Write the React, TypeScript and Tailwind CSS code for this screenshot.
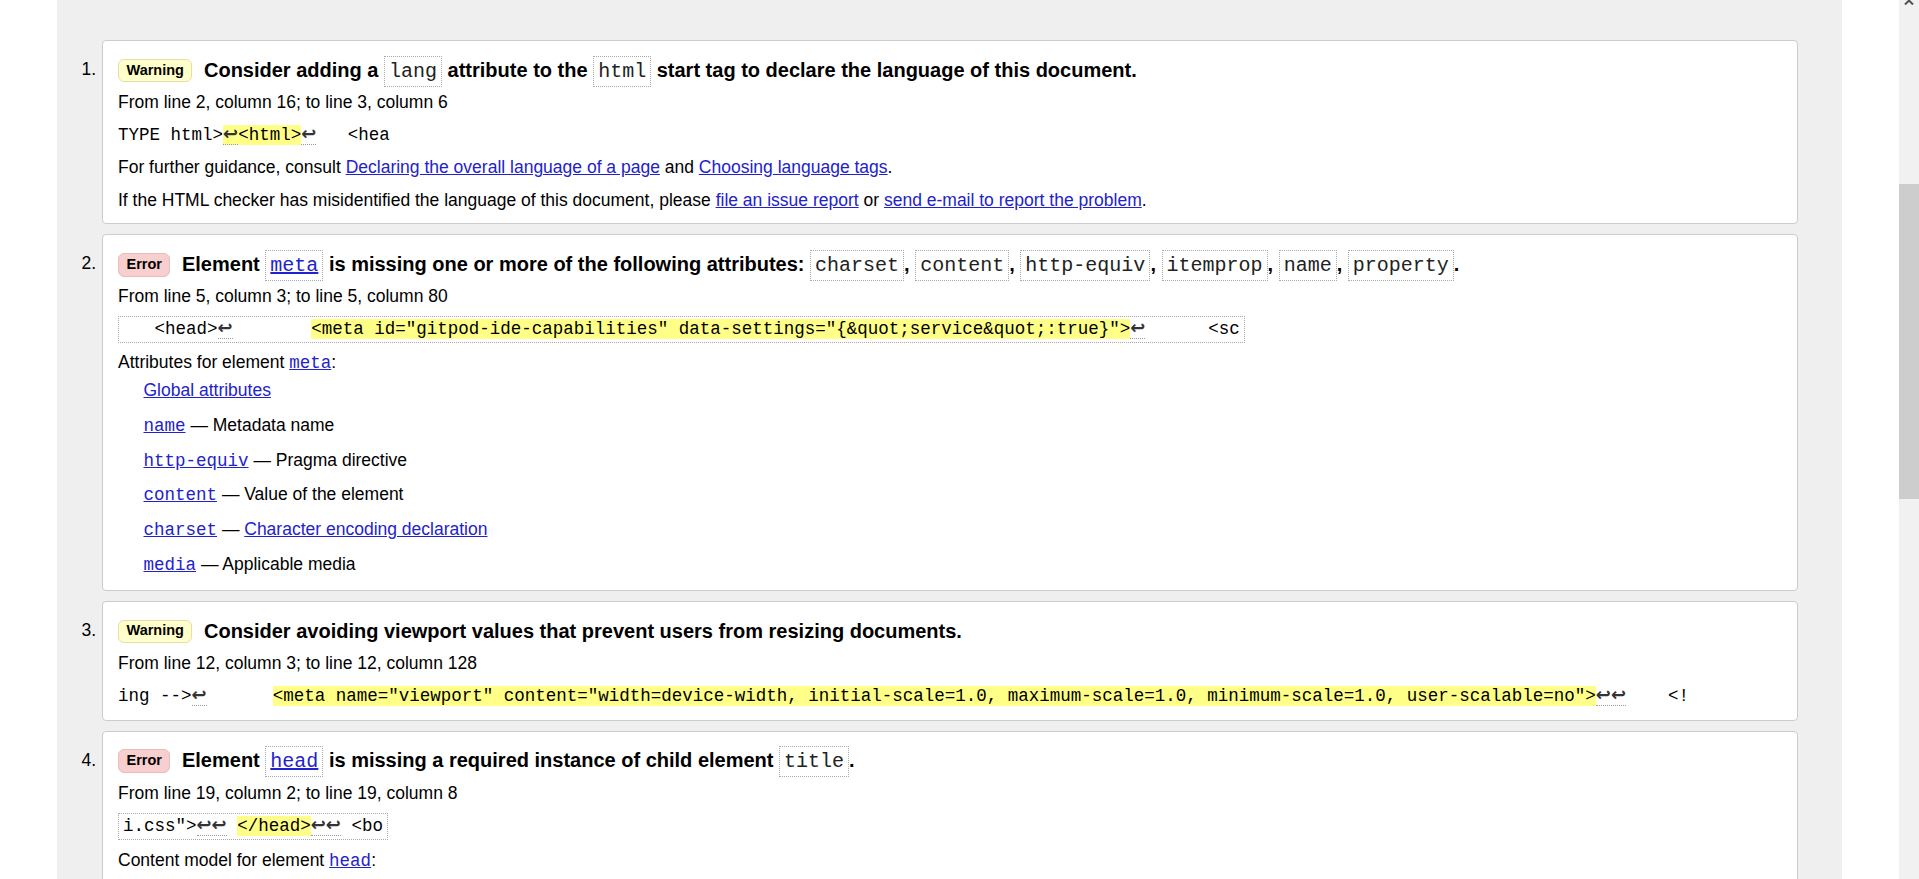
import type { ReactNode } from "react";

const MONO = "font-['Liberation_Mono','Courier_New',monospace]";
const LINK = "text-[#2222cc] underline";

// Inline code token with dotted frame, used in message titles
function Tok({ children, link }: { children: ReactNode; link?: boolean }) {
  return (
    <span
      className={`${MONO} border border-dotted border-[#a8a8a8] px-[4px] py-[3px] font-normal text-[#222]`}
    >
      {link ? <a className={LINK}>{children}</a> : children}
    </span>
  );
}

// Line-break marker
function Lf({ n = 1 }: { n?: number }) {
  return (
    <span className="border-b border-dotted border-[#999] font-['DejaVu_Sans',sans-serif] text-[18px] font-bold leading-none text-[#333]">
      {"↩".repeat(n)}
    </span>
  );
}

function Hl({ children, className = "" }: { children: ReactNode; className?: string }) {
  return <span className={`bg-[#ffff88] ${className}`}>{children}</span>;
}

function Badge({ kind }: { kind: "Warning" | "Error" }) {
  const tone =
    kind === "Warning"
      ? "bg-[#ffffcc] border-[#e4dfa8] h-[23.5px]"
      : "bg-[#f8cfcf] border-[#ecbcbc] h-[24px]";
  return (
    <span
      className={`flex shrink-0 items-center rounded-[6px] border px-[7.5px] text-[14.5px] font-bold ${tone}`}
    >
      {kind}
    </span>
  );
}

function Title({ kind, children }: { kind: "Warning" | "Error"; children: ReactNode }) {
  return (
    <div className="flex h-[35px] items-center gap-[11.5px] pt-[4px]">
      <Badge kind={kind} />
      <span className="whitespace-nowrap text-[20px] font-bold">{children}</span>
    </div>
  );
}

function Item({ n, pb, children }: { n: number; pb: string; children: ReactNode }) {
  return (
    <li className="flex">
      <div className="w-[45px] shrink-0 pt-[12.5px]">
        <div className="flex h-[34px] items-center justify-end pr-[6px]">{n}.</div>
      </div>
      <div
        className={`min-w-0 flex-1 rounded-[4px] border border-[#cccccc] bg-white px-[15px] pt-[10px] ${pb}`}
      >
        {children}
      </div>
    </li>
  );
}

function Attr({ name, children }: { name: string; children: ReactNode }) {
  return (
    <div className="h-[34.8px] leading-[34.8px]">
      <a className={`${MONO} ${LINK} text-[17.5px] leading-none`}>{name}</a> — {children}
    </div>
  );
}

export default function App() {
  return (
    <div className="flex h-screen overflow-hidden bg-white text-[17.5px] text-black font-['Liberation_Sans',Arial,sans-serif]">
      <main className="h-full flex-1 px-[57px]">
        <div className="h-full bg-[#efefef] pr-[44px] pt-[40px]">
          <ol className="flex flex-col gap-[10px]">
            <Item n={1} pb="pb-[7px]">
              <Title kind="Warning">
                Consider adding a <Tok>lang</Tok> attribute to the <Tok>html</Tok> start tag to
                declare the language of this document.
              </Title>
              <p className="h-[32.5px] leading-[32.5px]">
                From line 2, column 16; to line 3, column 6
              </p>
              <p className={`${MONO} h-[32.5px] whitespace-pre text-[17.5px] leading-[32.5px]`}>
                {"TYPE html>"}
                <Hl>
                  <Lf />
                  {"<html>"}
                </Hl>
                <Lf />
                {"   <hea"}
              </p>
              <p className="h-[32.5px] leading-[32.5px]">
                For further guidance, consult{" "}
                <a className={LINK}>Declaring the overall language of a page</a> and{" "}
                <a className={LINK}>Choosing language tags</a>.
              </p>
              <p className="h-[32.5px] leading-[32.5px]">
                If the HTML checker has misidentified the language of this document, please{" "}
                <a className={LINK}>file an issue report</a> or{" "}
                <a className={LINK}>send e-mail to report the problem</a>.
              </p>
            </Item>

            <Item n={2} pb="pb-[8px]">
              <Title kind="Error">
                Element <Tok link>meta</Tok> is missing one or more of the following attributes:{" "}
                <Tok>charset</Tok>, <Tok>content</Tok>, <Tok>http-equiv</Tok>,{" "}
                <Tok>itemprop</Tok>, <Tok>name</Tok>, <Tok>property</Tok>.
              </Title>
              <p className="h-[33px] leading-[33px]">From line 5, column 3; to line 5, column 80</p>
              <div
                className={`${MONO} mt-[3px] h-[27px] w-fit whitespace-pre border border-dotted border-[#a8a8a8] px-[4px] text-[17.5px] leading-[25px]`}
              >
                {"   <head>"}
                <Lf />
                {"       "}
                <Hl className="ml-[5px]">
                  {'<meta id="gitpod-ide-capabilities" data-settings="{&quot;service&quot;:true}">'}
                </Hl>
                <Lf />
                {"      <sc"}
              </div>
              <p className="mt-[8px] h-[22px] leading-[22px]">
                Attributes for element{" "}
                <a className={`${MONO} ${LINK} text-[17.5px] leading-none`}>meta</a>:
              </p>
              <div className="pl-[25.5px]">
                <div className="h-[34.8px] leading-[34.8px]">
                  <a className={LINK}>Global attributes</a>
                </div>
                <Attr name="name">Metadata name</Attr>
                <Attr name="http-equiv">Pragma directive</Attr>
                <Attr name="content">Value of the element</Attr>
                <Attr name="charset">
                  <a className={LINK}>Character encoding declaration</a>
                </Attr>
                <Attr name="media">Applicable media</Attr>
              </div>
            </Item>

            <Item n={3} pb="pb-[7.5px]">
              <Title kind="Warning">
                Consider avoiding viewport values that prevent users from resizing documents.
              </Title>
              <p className="h-[33px] leading-[33px]">From line 12, column 3; to line 12, column 128</p>
              <p className={`${MONO} h-[32.5px] whitespace-pre text-[17.5px] leading-[32.5px]`}>
                {"ing -->"}
                <Lf />
                {"      "}
                <Hl className="ml-[3px]">
                  {
                    '<meta name="viewport" content="width=device-width, initial-scale=1.0, maximum-scale=1.0, minimum-scale=1.0, user-scalable=no">'
                  }
                </Hl>
                <Lf n={2} />
                {"    <!"}
              </p>
            </Item>

            <Item n={4} pb="pb-[8px]">
              <Title kind="Error">
                Element <Tok link>head</Tok> is missing a required instance of child element{" "}
                <Tok>title</Tok>.
              </Title>
              <p className="h-[33px] leading-[33px]">From line 19, column 2; to line 19, column 8</p>
              <div
                className={`${MONO} mt-[3px] h-[27px] w-fit whitespace-pre border border-dotted border-[#a8a8a8] px-[4px] text-[17.5px] leading-[25px]`}
              >
                {'i.css">'}
                <Lf n={2} />
                {" "}
                <Hl>{"</head>"}</Hl>
                <Lf n={2} />
                {" <bo"}
              </div>
              <p className="mt-[9px] h-[22px] leading-[22px]">
                Content model for element{" "}
                <a className={`${MONO} ${LINK} text-[17.5px] leading-none`}>head</a>:
              </p>
              <div className="pl-[25.5px]">
                <div className="h-[34.8px] leading-[34.8px]">
                  If the document is an iframe srcdoc document or if title information is available
                  from a higher-level protocol:
                </div>
                <div className="h-[34.8px] leading-[34.8px]">
                  Zero or more elements of metadata content, of which no more than one is a title
                  element and no more than one is a base element.
                </div>
              </div>
            </Item>
          </ol>
        </div>
      </main>

      {/* scrollbar */}
      <div className="flex w-[20px] shrink-0 flex-col items-center bg-[#f1f1f1]">
        <svg width="12" height="6" viewBox="0 0 12 6" className="-mt-[1px]">
          <path d="M2 5.5 L6 1.5 L10 5.5" fill="none" stroke="#505050" strokeWidth="2" />
        </svg>
        <div className="mt-[179px] h-[315px] w-full bg-[#cdcdcd]" />
      </div>
    </div>
  );
}
